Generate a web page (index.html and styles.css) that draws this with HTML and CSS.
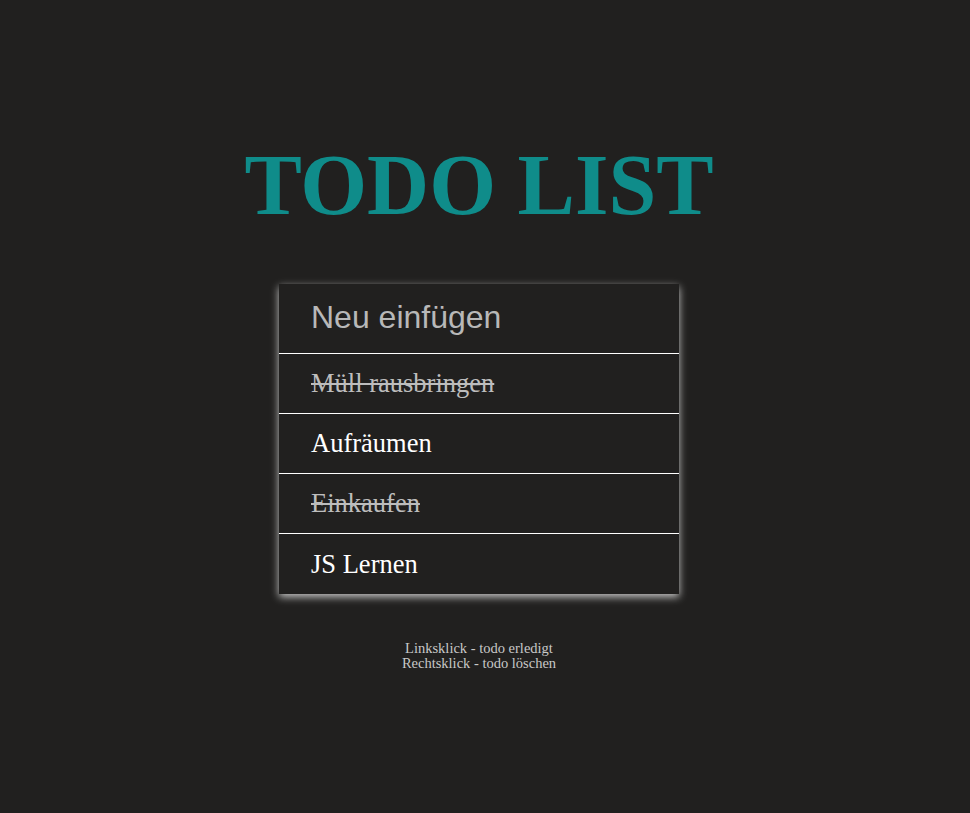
FILE: index.html
```html
<!DOCTYPE html>
<html lang="de">
<head>
<meta charset="utf-8">
<title>Todo List</title>
<link rel="stylesheet" href="styles.css">
</head>
<body>
<main class="app">
  <h1 class="title">TODO LIST</h1>
  <div class="card">
    <input class="new-todo" type="text" placeholder="Neu einfügen">
    <ul class="todos">
      <li class="todo done">Müll rausbringen</li>
      <li class="todo">Aufräumen</li>
      <li class="todo done">Einkaufen</li>
      <li class="todo">JS Lernen</li>
    </ul>
  </div>
  <p class="hint">Linksklick - todo erledigt<br>Rechtsklick - todo löschen</p>
</main>
</body>
</html>
```
FILE: styles.css
```css
html, body {
  margin: 0;
  padding: 0;
  background: #21201f;
  height: 100%;
}
body {
  font-family: "Liberation Serif", "DejaVu Serif", serif;
  color: #fff;
}
.app {
  display: flex;
  flex-direction: column;
  align-items: center;
  padding-right: 12px;
}
.title {
  margin: 142px 0 56px;
  font-size: 86px;
  line-height: 1;
  font-weight: bold;
  color: #0f8c8a;
}
.card {
  width: 400px;
  background: #21201f;
  box-shadow: 0 3px 8px rgba(255, 255, 255, 0.75);
}
.new-todo {
  display: block;
  box-sizing: border-box;
  width: 100%;
  height: 70px;
  margin: 0;
  padding: 0 32px 2px;
  border: none;
  border-bottom: 1px solid #fff;
  background: transparent;
  font-family: "Liberation Sans", Arial, sans-serif;
  font-size: 32px;
  color: #fff;
  outline: none;
}
.new-todo::placeholder {
  color: #b8b8b8;
}
.todos {
  list-style: none;
  margin: 0;
  padding: 0;
}
.todo {
  box-sizing: border-box;
  height: 60px;
  display: flex;
  align-items: center;
  padding: 0 32px;
  font-size: 26.5px;
  color: #fff;
  border-bottom: 1px solid #fff;
}
.todo:last-child {
  border-bottom: none;
}
.todo.done {
  color: #bdbdbd;
  text-decoration: line-through;
}
.hint {
  margin: 47px 0 0;
  font-size: 14.5px;
  line-height: 15px;
  text-align: center;
  color: #c8c8c8;
}
```
